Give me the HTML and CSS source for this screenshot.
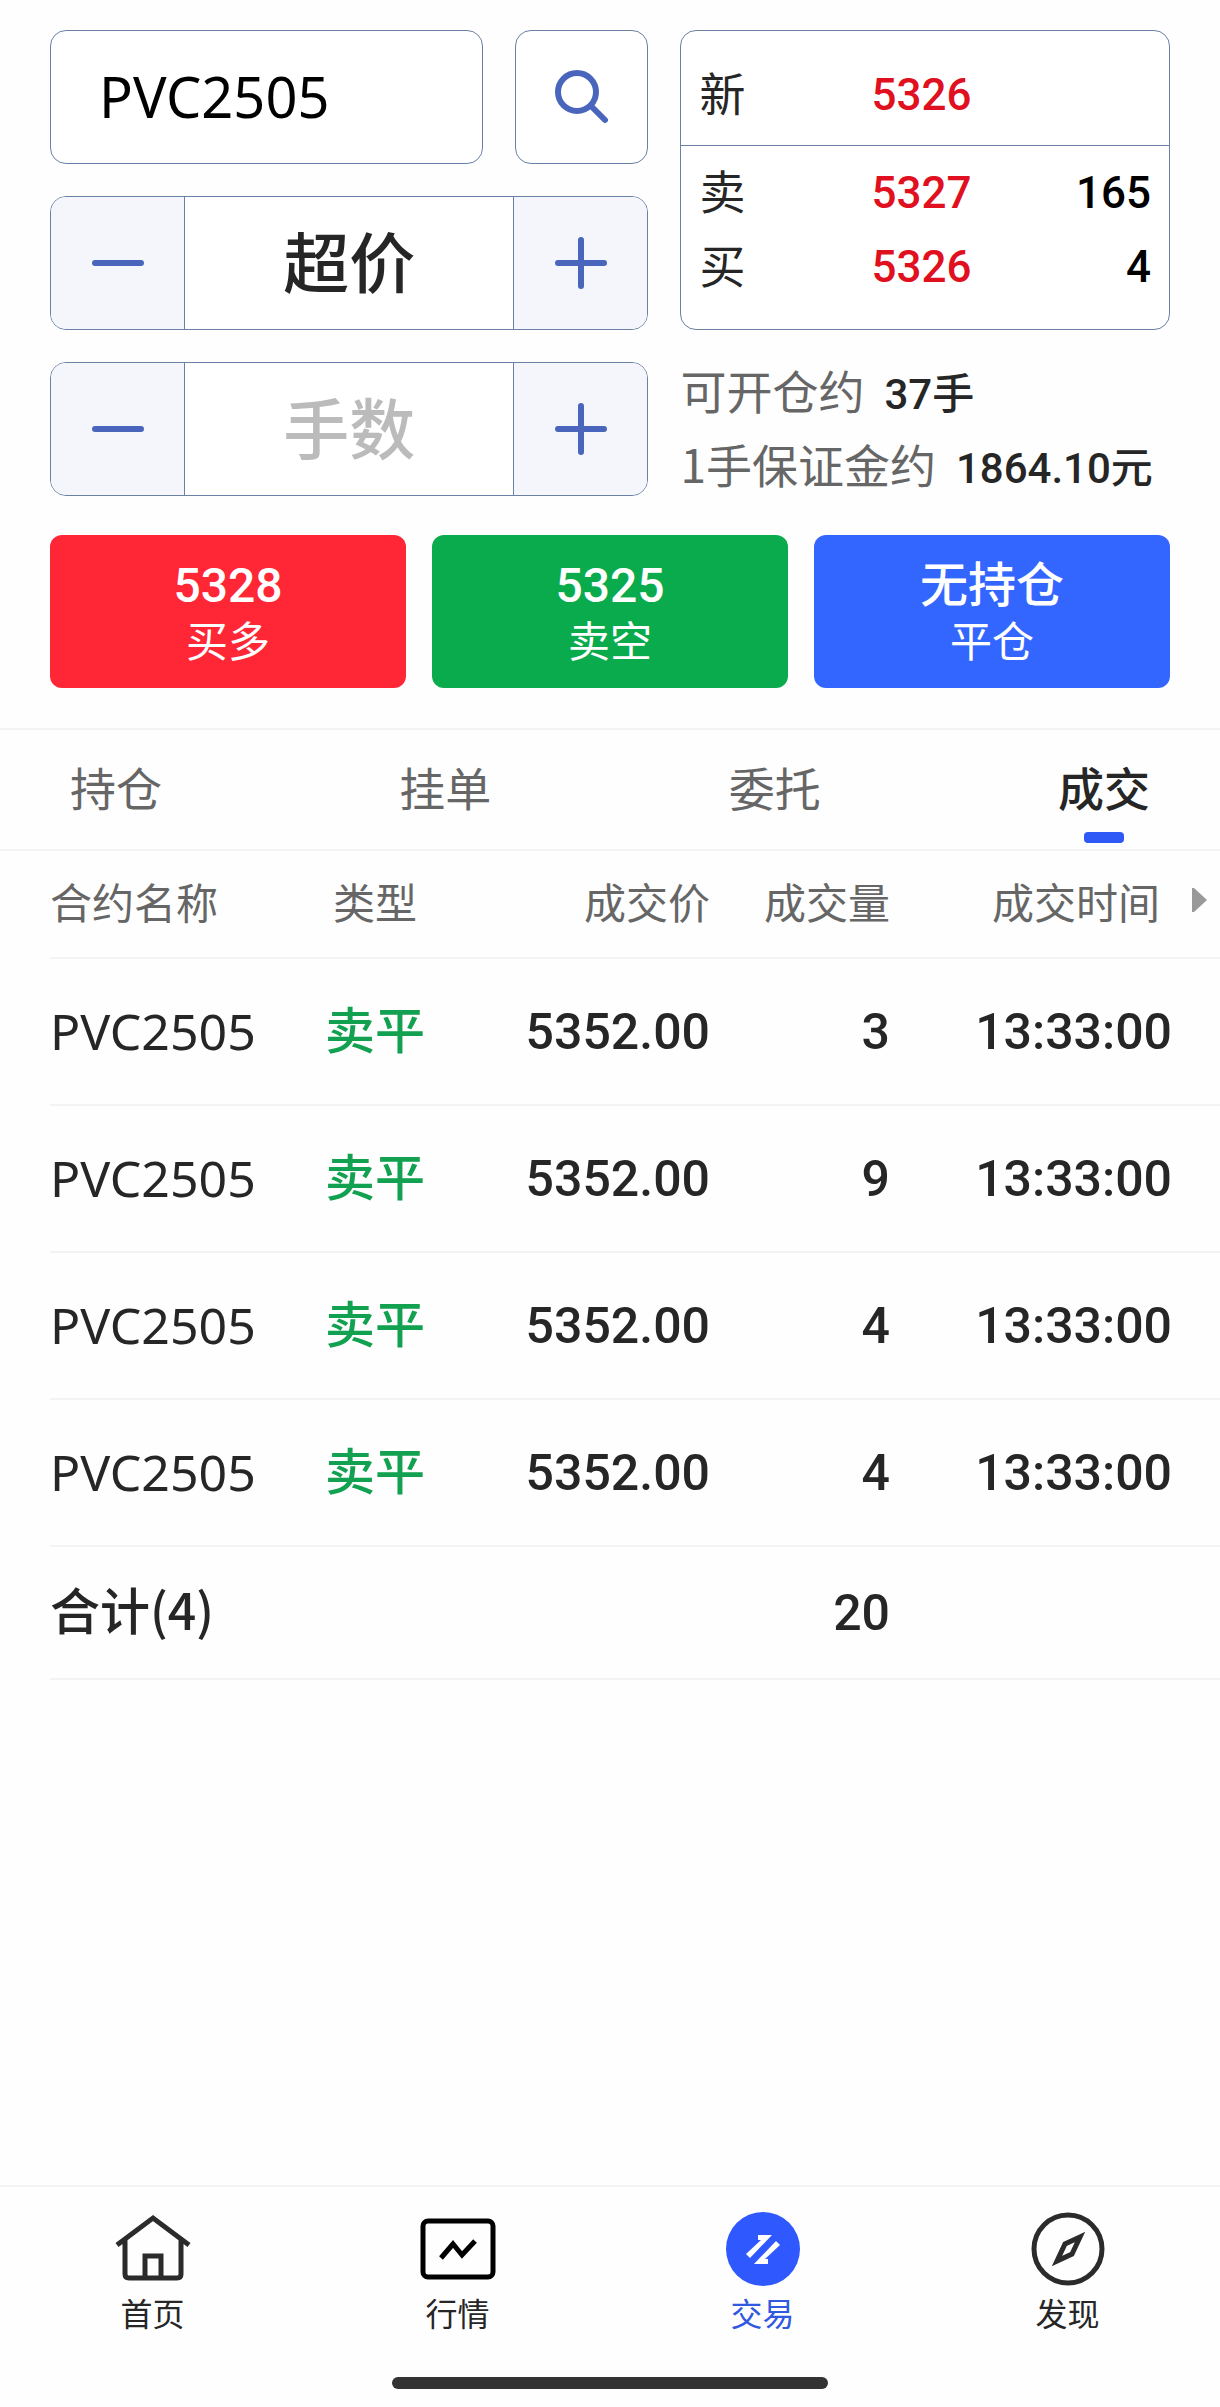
FILE: index.html
```html
<!DOCTYPE html>
<html lang="zh-CN">

<head>
  <meta charset="UTF-8">
  <meta name="viewport" content="width=device-width, initial-scale=1">
  <title>交易</title>
  <link rel="stylesheet" href="styles.css">
</head>

<body>
  <!-- Order form -->
  <form class="order">
    <div class="order-top">
      <div class="order-fields">
        <div class="symbol-row">
          <input type="text" class="symbol" aria-label="合约" value="PVC2505">
          <button type="button" class="search" aria-label="搜索">
            <svg width="54" height="54" viewBox="0 0 54 54">
              <circle cx="22" cy="22" r="19" />
              <path d="M36 36L50 50" />
            </svg>
          </button>
        </div>

        <div class="stepper">
          <button type="button" aria-label="减价"><svg width="52" height="52" viewBox="0 0 52 52"><path d="M3 26H49" /></svg></button>
          <input type="text" aria-label="价格" value="超价">
          <button type="button" aria-label="加价"><svg width="52" height="52" viewBox="0 0 52 52"><path d="M3 26H49M26 3V49" /></svg></button>
        </div>

        <div class="stepper">
          <button type="button" aria-label="减少手数"><svg width="52" height="52" viewBox="0 0 52 52"><path d="M3 26H49" /></svg></button>
          <input type="text" aria-label="手数" placeholder="手数">
          <button type="button" aria-label="增加手数"><svg width="52" height="52" viewBox="0 0 52 52"><path d="M3 26H49M26 3V49" /></svg></button>
        </div>
      </div>

      <div class="order-info">
        <div class="quote">
          <div class="quote-last">
            <div class="quote-row"><span>新</span><b class="price">5326</b></div>
          </div>
          <div class="quote-book">
            <div class="quote-row"><span>卖</span><b class="price">5327</b><b class="volume">165</b></div>
            <div class="quote-row"><span>买</span><b class="price">5326</b><b class="volume">4</b></div>
          </div>
        </div>
        <div class="funds">
          <p>可开仓约<b>37手</b></p>
          <p>1手保证金约<b>1864.10元</b></p>
        </div>
      </div>
    </div>

    <div class="actions">
      <button type="button" class="buy"><b>5328</b><span>买多</span></button>
      <button type="button" class="sell"><b>5325</b><span>卖空</span></button>
      <button type="button" class="close"><b>无持仓</b><span>平仓</span></button>
    </div>
  </form>

  <!-- Tabs -->
  <nav class="tabs">
    <a href="#position">持仓</a>
    <a href="#pending">挂单</a>
    <a href="#orders">委托</a>
    <a href="#deals" class="active">成交</a>
  </nav>

  <!-- Deal list -->
  <main class="deals" id="deals">
    <table>
      <colgroup>
        <col class="col-name">
        <col class="col-type">
        <col class="col-price">
        <col class="col-amount">
        <col>
      </colgroup>
      <thead>
        <tr>
          <th class="name">合约名称</th>
          <th class="type">类型</th>
          <th>成交价</th>
          <th>成交量</th>
          <th class="time"><span>成交时间<svg width="15" height="24" viewBox="0 0 15 24"><path d="M0 0H2L15 12L2 24H0Z" /></svg></span></th>
        </tr>
      </thead>
      <tbody>
        <tr>
          <td class="name">PVC2505</td>
          <td class="type">卖平</td>
          <td>5352.00</td>
          <td>3</td>
          <td class="time">13:33:00</td>
        </tr>
        <tr>
          <td class="name">PVC2505</td>
          <td class="type">卖平</td>
          <td>5352.00</td>
          <td>9</td>
          <td class="time">13:33:00</td>
        </tr>
        <tr>
          <td class="name">PVC2505</td>
          <td class="type">卖平</td>
          <td>5352.00</td>
          <td>4</td>
          <td class="time">13:33:00</td>
        </tr>
        <tr>
          <td class="name">PVC2505</td>
          <td class="type">卖平</td>
          <td>5352.00</td>
          <td>4</td>
          <td class="time">13:33:00</td>
        </tr>
      </tbody>
      <tfoot>
        <tr>
          <td class="total" colspan="3">合计(4)</td>
          <td>20</td>
          <td></td>
        </tr>
      </tfoot>
    </table>
  </main>

  <!-- Bottom navigation -->
  <footer class="bottom">
    <nav class="menu">
      <a href="#home">
        <svg width="76" height="76" viewBox="0 0 76 76">
          <path d="M2 34L38 7L74 34M10 29V63Q10 67 14 67H62Q66 67 66 63V29M30 67V45H46V67" />
        </svg>
        首页
      </a>
      <a href="#market">
        <svg class="dark" width="76" height="76" viewBox="0 0 76 76">
          <rect x="3" y="10" width="70" height="56" rx="5" />
          <path d="M21 47L33 33L42 44L55 30" />
        </svg>
        行情
      </a>
      <a href="#trade" class="active">
        <svg class="solid" width="76" height="76" viewBox="0 0 76 76">
          <circle cx="38" cy="38" r="37" />
          <path d="M33 24H47L25 47L21 43L36 29H33ZM43 53H29L51 30L55 34L40 48H43Z" />
        </svg>
        交易
      </a>
      <a href="#discover">
        <svg width="76" height="76" viewBox="0 0 76 76">
          <circle cx="38" cy="38" r="34" />
          <path d="M50 26L35 33L27 50L42 43Z" />
        </svg>
        发现
      </a>
    </nav>
    <div class="home-bar"></div>
  </footer>
</body>

</html>
```

FILE: styles.css
```css
* {
  box-sizing: border-box;
}

body {
  margin: 0;
  min-height: 100vh;
  display: flex;
  flex-direction: column;
  background-color: #fefefe;
  color: #262626;
  font-family: "Noto Sans CJK SC", sans-serif;
}

input,
button {
  margin: 0;
  font-family: inherit;
  color: inherit;
}

button {
  padding: 0;
  border: none;
  cursor: pointer;
}

a {
  color: inherit;
  text-decoration: none;
}

svg {
  display: block;
  fill: none;
}

/* Order form */
.order {
  padding: 30px 50px 40px;
}

.order-top {
  display: grid;
  grid-template-columns: 11fr 9fr;
  gap: 32px;
}

.order-fields,
.order-info {
  display: flex;
  flex-direction: column;
  gap: 32px;
  min-width: 0;
}

.order-info {
  gap: 22px;
}

.symbol-row {
  display: flex;
  gap: 32px;
}

.symbol,
.search,
.stepper,
.quote {
  border: 1px solid #6a80a6;
  border-radius: 16px;
  background-color: white;
}

.symbol {
  flex: 1;
  min-width: 0;
  height: 134px;
  padding: 0 48px 2px;
  font-family: "Noto Sans", "Noto Sans CJK SC", sans-serif;
  font-size: 56px;
  color: black;
}

.search {
  display: flex;
  align-items: center;
  justify-content: center;
  width: 133px;
}

.search svg,
.stepper svg {
  stroke: #4a66bc;
  stroke-width: 6;
  stroke-linecap: round;
}

/* Minus / value / plus */
.stepper {
  display: flex;
  height: 134px;
  overflow: hidden;
}

.stepper button {
  display: flex;
  align-items: center;
  justify-content: center;
  width: 133px;
  background-color: #f4f6fc;
}

.stepper input {
  flex: 1;
  min-width: 0;
  padding: 0 0 8px;
  border: solid #6a80a6;
  border-width: 0 1px;
  background-color: white;
  font-size: 66px;
  font-weight: 500;
  text-align: center;
}

.stepper input::placeholder {
  color: #bbb;
}

/* Quote box */
.quote {
  height: 300px;
  font-size: 46px;
  line-height: 74px;
}

.quote-last {
  height: 115px;
  padding: 27px 18px 0;
  border-bottom: 1px solid #6a80a6;
}

.quote-book {
  padding: 10px 18px 0;
}

.quote-row {
  display: grid;
  grid-template-columns: 172px 1fr 1fr;
}

.quote-row span {
  line-height: 66px;
}

.quote-row b {
  font-family: Roboto, sans-serif;
  font-size: 44px;
  font-weight: 500;
}

.price {
  color: #e01020;
}

.volume {
  color: black;
  text-align: right;
}

.funds {
  color: #666;
  font-size: 46px;
  line-height: 74px;
  white-space: nowrap;
}

.funds p {
  height: 74px;
  margin: 0;
}

.funds b {
  margin-left: 20px;
  color: #262626;
  font-family: Roboto, "Noto Sans CJK SC", sans-serif;
  font-size: 42px;
  font-weight: 500;
  line-height: 1;
}

/* Buy, sell and close buttons */
.actions {
  display: flex;
  gap: 26px;
  margin-top: 35px;
}

.actions button {
  flex: 1;
  display: flex;
  flex-direction: column;
  align-items: center;
  padding: 22px 0 25px;
  border-radius: 12px;
  color: white;
}

.actions b {
  font-family: Roboto, "Noto Sans CJK SC", sans-serif;
  font-size: 48px;
  font-weight: 500;
  line-height: 58px;
}

.actions span {
  font-size: 42px;
  line-height: 48px;
}

.buy {
  background-color: #ff2636;
}

.sell {
  background-color: #0aab4d;
}

.close {
  background-color: #3366ff;
}

/* Tabs */
.tabs {
  display: flex;
  justify-content: space-between;
  padding: 0 70px;
  border: solid #f3f3f3;
  border-width: 2px 0;
  color: #666;
  font-size: 46px;
  line-height: 112px;
}

.tabs a {
  padding-bottom: 7px;
}

.tabs .active {
  position: relative;
  color: #262626;
  font-weight: 500;
}

.tabs .active::after {
  content: "";
  position: absolute;
  left: 50%;
  bottom: 6px;
  width: 40px;
  height: 11px;
  margin-left: -20px;
  border-radius: 4px;
  background-color: #2f59f7;
}

/* Deal list */
.deals {
  padding-left: 50px;
}

.deals table {
  width: 100%;
  table-layout: fixed;
  border-collapse: collapse;
}

.col-name {
  width: 250px;
}

.col-type {
  width: 150px;
}

.col-price {
  width: 260px;
}

.col-amount {
  width: 180px;
}

.deals th,
.deals td {
  padding: 0;
  border-bottom: 2px solid #f3f3f3;
  text-align: right;
  white-space: nowrap;
}

.deals th {
  height: 107px;
  padding-bottom: 8px;
  color: #666;
  font-size: 42px;
  font-weight: 400;
}

.deals td {
  height: 147px;
  font-family: Roboto, sans-serif;
  font-size: 50px;
  font-weight: 500;
}

.deals .name,
.deals .total {
  text-align: left;
}

.deals td.name {
  padding-bottom: 2px;
  font-family: "Noto Sans", sans-serif;
  font-weight: 400;
}

.deals .type {
  text-align: center;
}

.deals td.type {
  color: #12a150;
}

.deals td.type,
.deals td.total {
  padding-bottom: 10px;
  font-family: "Noto Sans CJK SC", sans-serif;
}

.deals td.time {
  padding-right: 48px;
}

.deals th.time {
  padding-right: 13px;
}

.deals th span {
  display: flex;
  align-items: center;
  justify-content: flex-end;
  gap: 32px;
}

.deals th svg {
  fill: #999;
}

.deals tfoot td {
  height: 133px;
}

/* Bottom navigation */
.bottom {
  margin-top: auto;
  padding-bottom: 18px;
  border-top: 2px solid #f3f3f3;
}

.menu {
  display: flex;
  padding: 24px 0 44px;
}

.menu a {
  flex: 1;
  display: flex;
  flex-direction: column;
  align-items: center;
  gap: 4px;
  font-size: 32px;
  line-height: 42px;
}

.menu svg {
  stroke: #2b2b2b;
  stroke-width: 5;
}

.menu .dark {
  stroke: black;
}

.menu .solid {
  stroke: none;
}

.solid circle {
  fill: #2f59ff;
}

.solid path {
  fill: white;
}

.menu .active {
  color: #3058e0;
}

.home-bar {
  width: 436px;
  height: 12px;
  margin: 0 auto;
  border-radius: 6px;
  background-color: #333;
}
```
